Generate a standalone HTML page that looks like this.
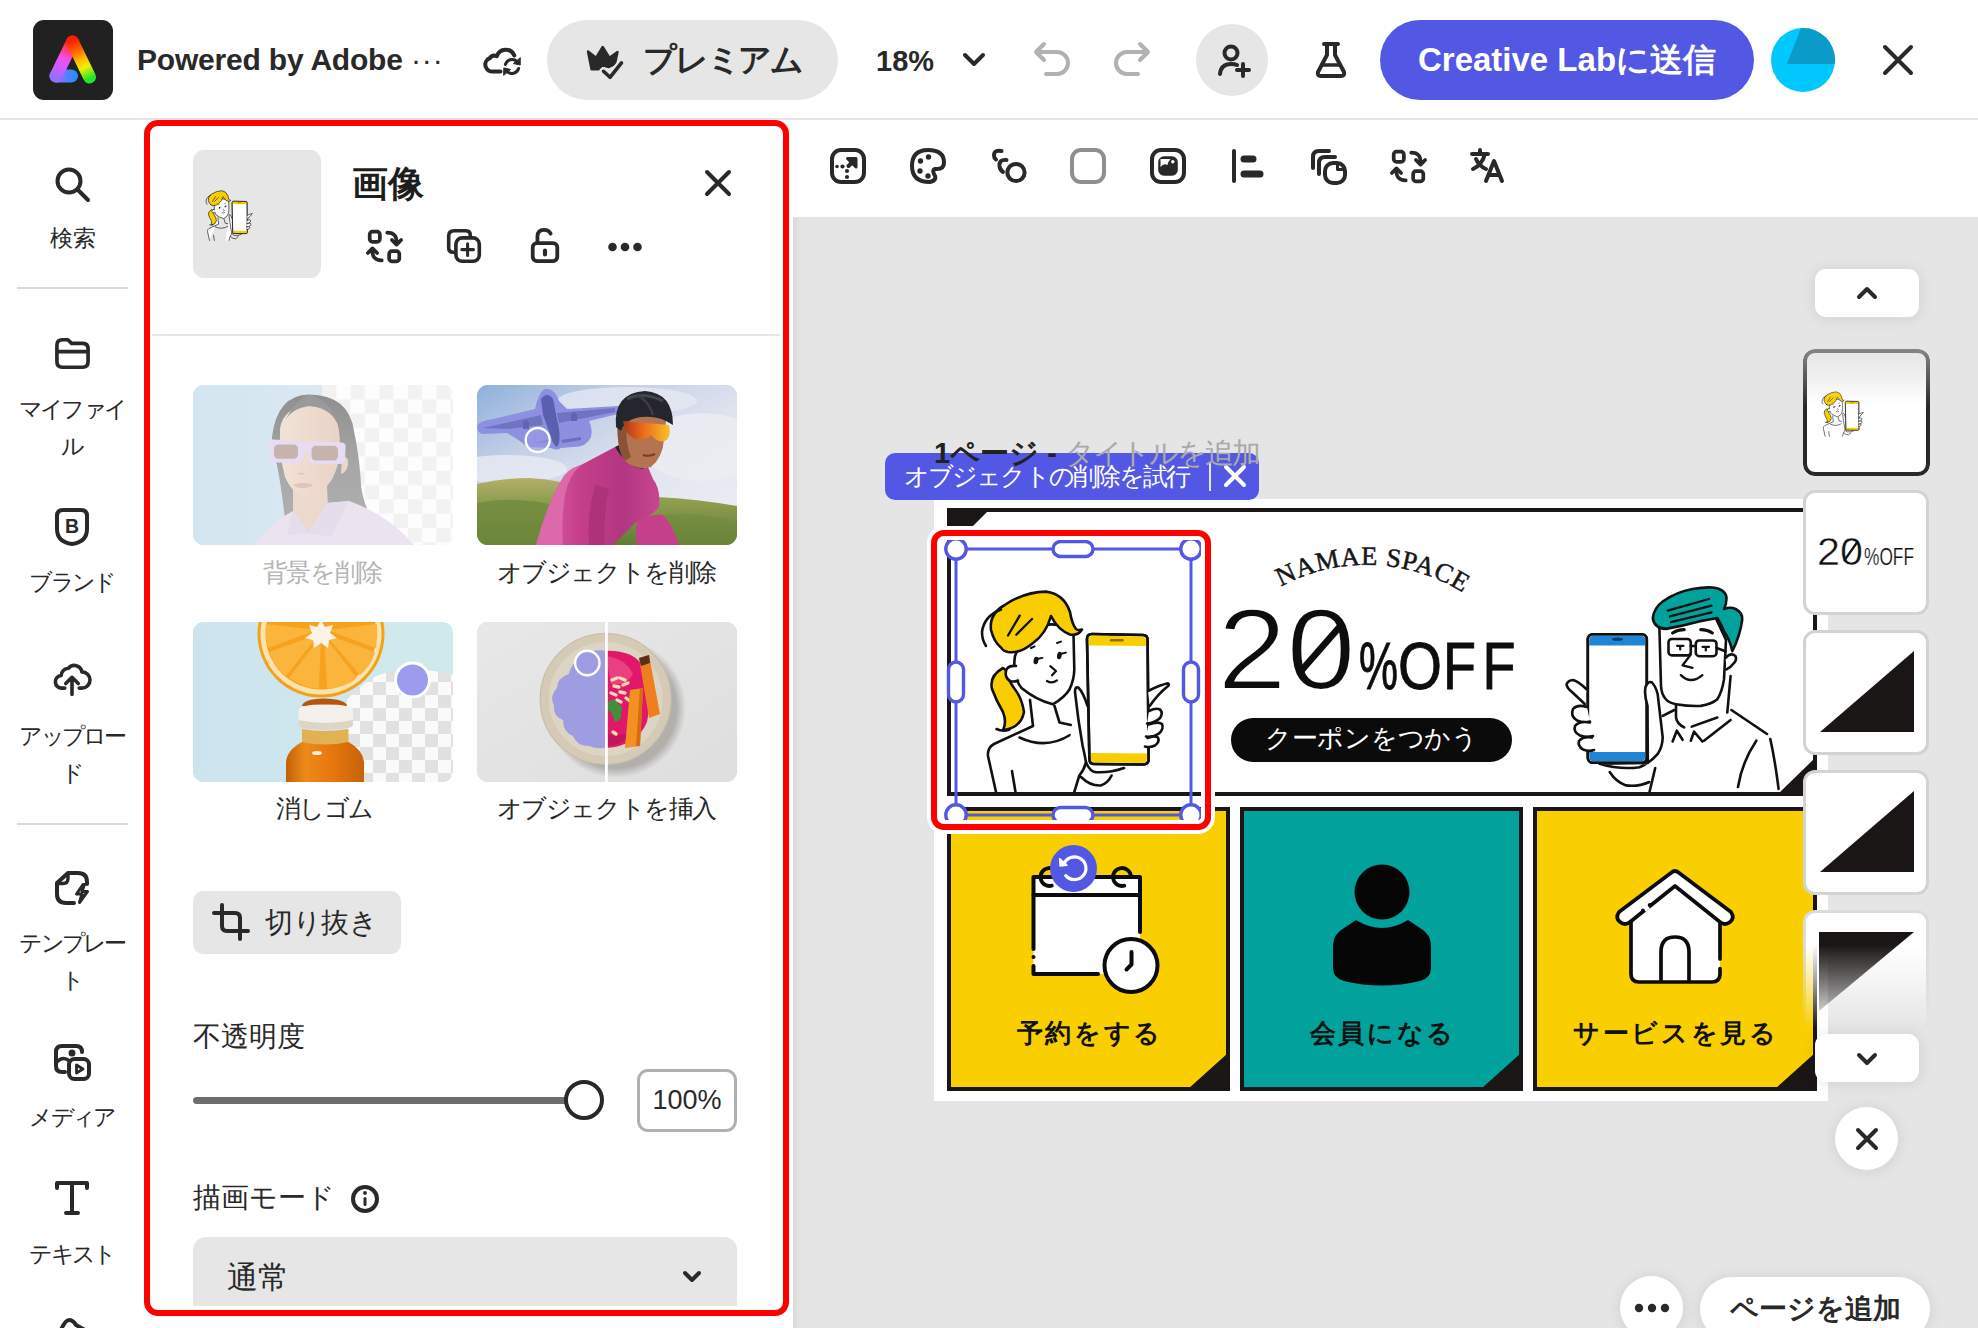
<!DOCTYPE html>
<html lang="ja">
<head>
<meta charset="utf-8">
<title>Adobe Express</title>
<style>
*{box-sizing:border-box;margin:0;padding:0}
html,body{width:1978px;height:1328px;overflow:hidden;background:#fff}
body{font-family:"Liberation Sans",sans-serif;color:#292929;position:relative}
.abs{position:absolute}
svg{position:absolute;overflow:visible}
.ic{fill:none;stroke:#292929;stroke-width:4;stroke-linecap:round;stroke-linejoin:round}
/* top bar */
#topbar{position:absolute;left:0;top:0;width:1978px;height:120px;background:#fff;border-bottom:2px solid #e6e6e6}
#logo{position:absolute;left:33px;top:20px;width:80px;height:80px;border-radius:11px;background:#212121}
#brand{position:absolute;left:137px;top:42px;font-size:30px;font-weight:bold;line-height:36px;white-space:nowrap;letter-spacing:-0.2px}
#premium{position:absolute;left:547px;top:20px;width:291px;height:80px;border-radius:40px;background:#e6e6e6}
#premium span{position:absolute;left:96px;top:20px;font-size:33px;font-weight:bold;line-height:40px;white-space:nowrap;letter-spacing:-2.2px}
#zoom{position:absolute;left:876px;top:43px;font-size:29px;font-weight:bold;line-height:36px}
#invite{position:absolute;left:1196px;top:24px;width:72px;height:72px;border-radius:36px;background:#e6e6e6}
#send{position:absolute;left:1380px;top:20px;width:374px;height:80px;border-radius:40px;background:#5258e4;color:#fff;font-size:33px;font-weight:bold;line-height:80px;text-align:center;white-space:nowrap}
#avatar{position:absolute;left:1771px;top:28px;width:64px;height:64px;border-radius:32px;background:#00c8ff;overflow:hidden}
/* sidebar */
#side{position:absolute;left:0;top:120px;width:143px;height:1208px;background:#fff}
.sl{position:absolute;left:0;width:143px;text-align:center;font-size:23px;line-height:37px;color:#292929;white-space:nowrap;letter-spacing:-2.700px;padding-left:1px}
.sdiv{position:absolute;left:17px;width:111px;height:2px;background:#dadada}
</style>
</head>
<body>

<!-- ================= TOP BAR ================= -->
<div id="topbar">
  <div id="logo">
    <svg width="80" height="80" viewBox="0 0 80 80" style="left:0;top:0" fill="none" stroke-width="13" stroke-linecap="round" stroke-linejoin="round">
      <defs>
        <linearGradient id="lgR" gradientUnits="userSpaceOnUse" x1="39" y1="20" x2="57" y2="58">
          <stop offset="0" stop-color="#ff1a00"/><stop offset=".3" stop-color="#ff6a00"/><stop offset=".55" stop-color="#ffc400"/><stop offset=".72" stop-color="#f2f000"/><stop offset="1" stop-color="#22e82a"/>
        </linearGradient>
        <linearGradient id="lgL" gradientUnits="userSpaceOnUse" x1="40" y1="20" x2="22" y2="58">
          <stop offset="0" stop-color="#ff1a00"/><stop offset=".25" stop-color="#ff3a6a"/><stop offset=".5" stop-color="#f050f0"/><stop offset=".8" stop-color="#c060ff"/><stop offset="1" stop-color="#9070ff"/>
        </linearGradient>
        <linearGradient id="lgB" gradientUnits="userSpaceOnUse" x1="22" y1="56" x2="42" y2="56">
          <stop offset="0" stop-color="#9a70ff"/><stop offset=".5" stop-color="#5f7cff"/><stop offset="1" stop-color="#2b8cff"/>
        </linearGradient>
      </defs>
      <path d="M23 56 H38.500" stroke="url(#lgB)"/>
      <path d="M39.500 22 L23 56" stroke="url(#lgL)"/>
      <path d="M39.500 22 L56.500 57" stroke="url(#lgR)"/>
    </svg>
  </div>
  <div id="brand">Powered by Adobe <span style="font-weight:normal;letter-spacing:1px">···</span></div>
  <!-- cloud sync -->
  <svg width="70" height="60" viewBox="470 30 70 60" style="left:470px;top:30px" class="ic" stroke-width="3.300">
    <path d="M500.500 71.500 H493.500 A7 7 0 0 1 490 58 Q492.500 54.500 496.800 56.200 A9.300 9.300 0 0 1 514.300 55.500"/>
    <path d="M505.400 64.500 A7 7 0 0 1 517 61.600" stroke-width="3"/><path d="M520.300 58 L520.200 65 L513.800 63.600 Z" fill="#292929" stroke-width="1"/>
    <path d="M518.600 68.500 A7 7 0 0 1 507 71.400" stroke-width="3"/><path d="M503.700 75 L503.800 68 L510.200 69.400 Z" fill="#292929" stroke-width="1"/>
  </svg>
  <div id="premium">
    <svg width="291" height="80" viewBox="547 20 291 80" style="left:0;top:0">
      <path d="M588 51.500 L596 57.800 L602.700 47 L609.500 57.800 L617.500 52 L615 64 L609 67 L602.500 65.500 L598.500 69.300 L591.500 69.300 Z" fill="#292929" stroke="#292929" stroke-width="2.400" stroke-linejoin="round"/>
      <path d="M603.500 71.300 L610 77.300 L621.500 62.800" fill="none" stroke="#e6e6e6" stroke-width="8" stroke-linecap="round" stroke-linejoin="round"/>
      <path d="M603.500 71.300 L610 77.300 L621.500 62.800" fill="none" stroke="#292929" stroke-width="3.600" stroke-linecap="round" stroke-linejoin="round"/>
    </svg>
    <span>プレミアム</span>
  </div>
  <div id="zoom">18%</div>
  <svg width="24" height="16" viewBox="0 0 24 16" style="left:962px;top:52px" class="ic" stroke-width="4"><path d="M3 3 L12 12 L21 3"/></svg>
  <!-- undo / redo -->
  <svg width="40" height="40" viewBox="0 0 40 40" style="left:1032px;top:40px" class="ic" stroke="#b1b1b1" stroke-width="3.6"><path d="M12 4 L4 12 L12 20 M4 12 H25 A11 11 0 0 1 25 34 H14" style="stroke:#b1b1b1"/></svg>
  <svg width="40" height="40" viewBox="0 0 40 40" style="left:1112px;top:40px" class="ic" stroke-width="3.6"><path d="M28 4 L36 12 L28 20 M36 12 H15 A11 11 0 0 0 15 34 H26" style="stroke:#b1b1b1"/></svg>
  <div id="invite">
    <svg width="36" height="36" viewBox="0 0 36 36" style="left:20px;top:19px" class="ic" stroke-width="3.4">
      <circle cx="15" cy="10" r="6.500"/><path d="M4 31 Q5 21 15 21 Q19 21 21 22"/><path d="M27 21 V33 M21 27 H33"/>
    </svg>
  </div>
  <!-- flask -->
  <svg width="36" height="40" viewBox="0 0 36 40" style="left:1313px;top:40px" class="ic" stroke-width="4">
    <path d="M11 4 H25 M14 4 V15 L5 32 Q4 36 8 36 H28 Q32 36 31 32 L22 15 V4"/><path d="M10 25 H26" stroke-width="3.5"/>
  </svg>
  <div id="send">Creative Labに送信</div>
  <div id="avatar">
    <svg width="64" height="64" viewBox="0 0 64 64" style="left:0;top:0"><path d="M30 0 L64 0 L64 36 L16 36 Z" fill="#0a9bc9"/></svg>
  </div>
  <svg width="34" height="34" viewBox="0 0 34 34" style="left:1881px;top:43px" class="ic" stroke-width="4.5"><path d="M4 4 L30 30 M30 4 L4 30"/></svg>
</div>

<!-- ================= SIDEBAR ================= -->
<div id="side">
  <!-- coordinates inside are relative to y=120 -->
  <svg width="40" height="40" viewBox="0 0 40 40" style="left:52px;top:44px" class="ic" stroke-width="4.2"><circle cx="17" cy="17" r="11.500"/><path d="M26 26 L36 36"/></svg>
  <div class="sl" style="top:100px;letter-spacing:0;padding-left:3px">検索</div>
  <div class="sdiv" style="top:167px"></div>
  <svg width="37" height="33" viewBox="0 0 40 36" style="left:54px;top:217px" class="ic" stroke-width="4.500"><path d="M3 9 Q3 3 9 3 H15 L19 7 H31 Q37 7 37 13 V27 Q37 33 31 33 H9 Q3 33 3 27 Z M3 16 H37"/></svg>
  <div class="sl" style="top:271px">マイファイ</div>
  <div class="sl" style="top:308px">ル</div>
  <svg width="36" height="40" viewBox="0 0 36 40" style="left:54px;top:387px" class="ic" stroke-width="4.200"><path d="M3 9 Q3 3 9 3 H27 Q33 3 33 9 V22 Q33 35 18 37 Q3 35 3 22 Z"/><text x="18" y="25.800" font-family="Liberation Sans, sans-serif" font-size="19.500" font-weight="bold" text-anchor="middle" fill="#292929" stroke="none">B</text></svg>
  <div class="sl" style="top:444px">ブランド</div>
  <svg width="36" height="36" viewBox="0 0 40 40" style="left:54px;top:542px" class="ic" stroke-width="4.400"><path d="M12 29 H9 A7 7 0 0 1 8 15 A8 8 0 0 1 16 7 A8.500 8.500 0 0 1 31 11 A7.500 7.500 0 0 1 31 29 H28"/><path d="M20 36 V18 M13 24 L20 17 L27 24"/></svg>
  <div class="sl" style="top:598px">アップロー</div>
  <div class="sl" style="top:635px">ド</div>
  <div class="sdiv" style="top:703px"></div>
  <svg width="38" height="38" viewBox="0 0 38 38" style="left:53px;top:749px" class="ic" stroke-width="3.800"><path d="M34 15 V13 Q34 4 25 4 H15 L4 14 V25 Q4 34 13 34 H21"/><path d="M4 14.500 H10 Q15 14.500 15 9.500 V4.500" stroke-width="3.400"/><path d="M30 15.500 L23.500 25 H29 L26.500 33.500 L34.500 22.500 H29 L31.500 15.500 Z" stroke-width="3" fill="#fff"/></svg>
  <div class="sl" style="top:805px">テンプレー</div>
  <div class="sl" style="top:842px">ト</div>
  <svg width="40" height="40" viewBox="0 0 40 40" style="left:52px;top:922px" class="ic" stroke-width="4"><path d="M13 30 H10 Q4 30 4 24 V10 Q4 4 10 4 H24 Q30 4 30 10"/><path d="M5 20 Q10 14 16 18" stroke-width="3.4"/><circle cx="20" cy="11" r="1.500" fill="#292929"/><rect x="17" y="17" width="20" height="20" rx="5.500"/><path d="M24.500 23 V31 L31 27 Z" stroke-width="2.800"/></svg>
  <div class="sl" style="top:979px">メディア</div>
  <svg width="40" height="40" viewBox="0 0 40 40" style="left:52px;top:1058px" class="ic" stroke-width="4"><path d="M5 10 V5 H35 V10 M20 5 V35 M14 35 H26"/></svg>
  <div class="sl" style="top:1116px">テキスト</div>
  <svg width="40" height="20" viewBox="0 0 40 20" style="left:49px;top:1196px" class="ic" stroke-width="4"><path d="M11 16 Q16 4 20 4 Q24 4 27 9 L36 14"/></svg>
  <div class="abs" style="left:143px;top:1196px;width:2px;height:12px;background:#e3e3e3"></div>
</div>

<!-- ================= PANEL ================= -->
<style>
#panel{position:absolute;left:143px;top:120px;width:650px;height:1208px;background:#fff;overflow:hidden}
#panelred{position:absolute;left:144px;top:120px;width:645px;height:1196px;border:6px solid #ff0000;border-radius:14px;z-index:20;pointer-events:none}
#pthumb{position:absolute;left:50px;top:30px;width:128px;height:128px;border-radius:11px;background:#e6e6e6;overflow:hidden}
#ptitle{position:absolute;left:209px;top:40px;font-size:36px;font-weight:bold;line-height:48px;color:#1d1d1d}
.card{position:absolute;width:260px;height:160px;border-radius:11px;overflow:hidden}
.clab{position:absolute;width:300px;text-align:center;font-size:25px;line-height:36px;white-space:nowrap;color:#292929;letter-spacing:-1.400px;text-indent:-1.400px}
#cropbtn{position:absolute;left:50px;top:771px;width:208px;height:63px;border-radius:10px;background:#e6e6e6}
#cropbtn span{position:absolute;left:72px;top:13px;font-size:28px;line-height:38px;white-space:nowrap;letter-spacing:-.500px}
.plabel{position:absolute;left:50px;font-size:28px;line-height:40px;white-space:nowrap}
#track{position:absolute;left:50px;top:977px;width:380px;height:7px;border-radius:4px;background:#6d6d6d}
#knob{position:absolute;left:421px;top:960px;width:40px;height:40px;border-radius:20px;background:#fff;border:4px solid #292929}
#opin{position:absolute;left:494px;top:949px;width:100px;height:63px;border-radius:11px;border:3px solid #b1b1b1;background:#fff;font-size:27px;line-height:57px;text-align:center}
#blend{position:absolute;left:50px;top:1117px;width:544px;height:69px;border-radius:13px 13px 0 0;background:#e6e6e6;overflow:hidden}
#blend span{position:absolute;left:34px;top:20px;font-size:31px;line-height:42px}
</style>
<div id="panel">
  <div id="pthumb">
    <svg width="128" height="128" viewBox="193 151 128 128" style="left:0;top:0"><use href="#woman" transform="translate(-37.500,45) scale(.248)" style="stroke:#333;stroke-width:3.400"/></svg>
  </div>
  <div id="ptitle">画像</div>
  <svg width="30" height="30" viewBox="0 0 30 30" style="left:560px;top:48px" class="ic" stroke-width="4"><path d="M4 4 L26 26 M26 4 L4 26"/></svg>
  <!-- action icons row (y center 246 abs => 126 rel) -->
  <svg width="37" height="37" viewBox="0 0 40 40" style="left:222.500px;top:108px" class="ic" stroke-width="4.300">
    <rect x="4" y="4" width="11" height="11" rx="3"/><rect x="25" y="25" width="11" height="11" rx="3"/>
    <path d="M23 5 Q34 5 33 17 M28 13 L33 18 L38 13"/><path d="M17 35 Q6 35 7 23 M2 27 L7 22 L12 27"/>
  </svg>
  <svg width="36" height="36" viewBox="0 0 40 40" style="left:303px;top:108px" class="ic" stroke-width="4.200">
    <path d="M9 27 H8 Q3 27 3 22 V9 Q3 3 9 3 H22 Q27 3 27 8 V9"/><rect x="11" y="11" width="26" height="26" rx="7"/><path d="M24 17.500 V30.500 M17.500 24 H30.500" stroke-width="3.400"/>
  </svg>
  <svg width="34" height="38" viewBox="0 0 36 40" style="left:384.500px;top:106px" class="ic" stroke-width="4.200">
    <rect x="5" y="18" width="26" height="19" rx="4.500"/><path d="M10 18 V11 Q10 4 17 4 Q22 4 24 8"/><path d="M18 26 V30" stroke-width="4.400"/>
  </svg>
  <svg width="40" height="12" viewBox="0 0 40 12" style="left:461.500px;top:120.500px"><circle cx="7.500" cy="6" r="4.300" fill="#292929"/><circle cx="20" cy="6" r="4.300" fill="#292929"/><circle cx="32.500" cy="6" r="4.300" fill="#292929"/></svg>
  <div class="abs" style="left:9px;top:214px;width:628px;height:2px;background:#e6e6e6"></div>

  <!-- card 1: remove background (disabled / faded) -->
  <div class="card" style="left:50px;top:265px;background:#dde9f1">
    <svg width="260" height="160" viewBox="0 0 260 160" style="left:0;top:0">
      <defs>
        <pattern id="chk1" x="129" y="0" width="28.600" height="28.600" patternUnits="userSpaceOnUse"><rect width="28.600" height="28.600" fill="#fdfdfd"/><rect width="14.300" height="14.300" fill="#f2f2f2"/><rect x="14.300" y="14.300" width="14.300" height="14.300" fill="#f2f2f2"/></pattern>
        <linearGradient id="c1bg" x1="0" y1="0" x2="1" y2="0"><stop offset="0" stop-color="#d3e5f0"/><stop offset="1" stop-color="#e2ecf4"/></linearGradient>
        <linearGradient id="hairg" x1="0" y1="0" x2="0" y2="1"><stop offset="0" stop-color="#8f8f8f"/><stop offset=".5" stop-color="#a6a6a6"/><stop offset="1" stop-color="#b2b2b2"/></linearGradient>
        <linearGradient id="faceg" x1="0" y1="0" x2="1" y2="0"><stop offset="0" stop-color="#f2e2d6"/><stop offset="1" stop-color="#e9d3c6"/></linearGradient>
      </defs>
      <rect width="260" height="160" fill="url(#c1bg)"/>
      <rect x="129" y="0" width="131" height="160" fill="url(#chk1)"/>
      <!-- hair -->
      <path d="M79 52 Q84 10 116 9.500 Q156 10 161 46 Q166 70 167.500 92 Q168 112 176 128 L150 146 L92 134 Q88 100 84 80 Q79 66 79 52 Z" fill="url(#hairg)"/>
      <!-- neck -->
      <path d="M100 104 L100 150 L136 150 L134 100 Z" fill="#ecd9cd"/>
      <!-- face -->
      <path d="M87 44 Q90 22 116 21 Q144 22 146 46 Q150 76 138 96 Q126 112 113 112.500 Q100 110 92 92 Q86 70 87 44 Z" fill="url(#faceg)"/>
      <path d="M114 10 Q100 18 90 40 Q96 24 116 21 Q138 22 146 42 Q140 18 118 10 Z" fill="#9a9a9a"/>
      <path d="M149 72 Q156 70 155 80 Q153 88 148 89 Z" fill="#ead6ca"/>
      <!-- sunglasses -->
      <path d="M76 58 Q76 54.500 80 54.600 L106 56 Q110 56.500 112 59 Q114 56.500 119 56.500 L149 57.500 Q153 58 152.600 62 L152 75 Q151.500 79 147 79 L121 78.500 Q116 78 115.500 73 L115 66 L111 66 L110.500 73 Q110 78 105 78 L81 77.500 Q76.500 77 76.500 72.500 Z" fill="#e7dcf4"/>
      <rect x="81" y="59.500" width="24" height="14.300" rx="4.500" fill="#c6b3ab"/>
      <rect x="118.500" y="60.800" width="26.500" height="14.800" rx="4.500" fill="#c6b3ab"/>
      <path d="M105 88 q3 2 6 0 M101 100 q9 -3 18 0 q-9 5 -18 0 Z" fill="#e4c4bb" stroke="#e0c0b6" stroke-width="1.200"/>
      <!-- shirt -->
      <path d="M62 160 Q74 140 100 126 L116 148 L134 118 L156 116 Q196 130 221 160 Z" fill="#ebe4f0"/>
      <path d="M100 126 L94 150 L116 148 L138 152 L156 116 L134 118 L116 148 Z" fill="#e5dcec"/>
    </svg>
  </div>
  <div class="clab" style="left:30px;top:434px;color:#b4b4b4">背景を削除</div>

  <!-- card 2: remove object -->
  <div class="card" style="left:334px;top:265px;background:#d5dcea">
    <svg width="260" height="160" viewBox="0 0 260 160" style="left:0;top:0">
      <defs>
        <linearGradient id="sky" x1="0" y1="0" x2="1" y2="1"><stop offset="0" stop-color="#8fb0dc"/><stop offset=".28" stop-color="#c3cfe6"/><stop offset=".6" stop-color="#e2e5ef"/><stop offset="1" stop-color="#eef0f4"/></linearGradient>
        <linearGradient id="hill" x1="0" y1="0" x2="0" y2="1"><stop offset="0" stop-color="#b6ae6c"/><stop offset=".3" stop-color="#93a052"/><stop offset="1" stop-color="#5f7c34"/></linearGradient>
        <linearGradient id="gog" x1="0" y1="0" x2="1" y2="0"><stop offset="0" stop-color="#a8381a"/><stop offset=".45" stop-color="#ee6c1c"/><stop offset="1" stop-color="#f5c22e"/></linearGradient>
        <linearGradient id="jer" x1="0" y1="0" x2="1" y2="0"><stop offset="0" stop-color="#d862a4"/><stop offset=".35" stop-color="#c63f8b"/><stop offset=".7" stop-color="#b23680"/><stop offset="1" stop-color="#c8468f"/></linearGradient>
      </defs>
      <rect width="260" height="160" fill="url(#sky)"/>
      <ellipse cx="150" cy="16" rx="70" ry="14" fill="#e6e9f2" opacity=".75"/>
      <ellipse cx="225" cy="62" rx="60" ry="34" fill="#ecedf3" opacity=".8"/>
      <ellipse cx="30" cy="84" rx="60" ry="14" fill="#e9ebf2" opacity=".8"/>
      <!-- hills -->
      <path d="M0 99 Q26 93 52 93 Q84 94 110 106 L180 112 Q220 114 260 121 V160 H0 Z" fill="url(#hill)"/>
      <path d="M0 118 Q40 110 84 122 L84 160 H0 Z" fill="#6f8a3c" opacity=".75"/>
      <path d="M176 132 Q220 124 260 138 V160 H176 Z" fill="#708a3a" opacity=".6"/>
      <!-- plane blob -->
      <path d="M0 41 Q2 36 16 34 L58 24 Q62 6 68 4 Q77 2 82 16 L90 24 L141 21 Q146 25 141 29 L112 36 Q116 44 114 52 Q110 62 96 62 L84 63 Q80 66 74 63 L50 62 Q44 56 30 48 L6 49 Q0 48 0 41 Z" fill="#8d90e0"/>
      <path d="M64 14 Q70 6 76 14 L82 44 Q84 58 80 62 Q76 60 74 52 L66 30 Z" fill="#5b60ae"/>
      <path d="M6 43 L64 30 L66 40 L30 44 Z M80 28 L138 23 L138 27 L82 38 Z" fill="#6f73c0"/>
      <path d="M46 38 q3 -6 6 0 v6 h-6 Z M94 30 q3 -6 6 0 v6 h-6 Z" fill="#5f64b2"/>
      <path d="M56 58 L74 54 L74 57 Z M84 55 L104 52 L104 55 L86 58 Z" fill="#6a6ebc"/>
      <circle cx="60.700" cy="55" r="12" fill="#9b9ee8" fill-opacity=".55" stroke="#fff" stroke-width="2.400"/>
      <!-- cyclist body -->
      <path d="M59 160 Q70 120 84 96 Q90 84 104 80 L138 62 L166 70 L176 94 Q184 104 182 122 Q172 134 160 136 L136 160 Z" fill="url(#jer)"/>
      <path d="M104 80 Q92 90 88 110 Q84 136 86 160 L59 160 Q70 120 84 96 Q90 84 104 80 Z" fill="#dc6aaa"/>
      <path d="M118 100 Q110 130 112 160 L128 160 Q126 128 132 104 Z" fill="#a52f74" opacity=".7"/>
      <path d="M160 136 Q176 128 186 130 Q196 140 202 160 L160 160 Q158 146 160 136 Z" fill="#c5408b"/>
      <!-- neck / collar -->
      <path d="M138 62 L150 56 L172 70 L166 84 Q150 82 138 62 Z" fill="#2a2326"/>
      <!-- face -->
      <path d="M141 28 Q138 62 148 76 Q160 86 174 82 Q186 72 187 54 L190 28 Z" fill="#b47452"/>
      <path d="M141 36 Q139 62 148 76 L154 72 Q148 58 150 40 Z" fill="#8a5238"/>
      <path d="M166 70 q6 2 12 -1" stroke="#7a3f2c" stroke-width="2" fill="none"/>
      <!-- helmet -->
      <path d="M139 42 Q136 8 168 6 Q196 8 196 40 Q182 30 164 32 Q148 34 144 46 Z" fill="#23262c"/>
      <path d="M150 14 Q166 6 186 16" stroke="#41464f" stroke-width="3" fill="none"/>
      <path d="M160 10 Q172 16 176 30" stroke="#3a3f48" stroke-width="2.500" fill="none"/>
      <!-- goggles -->
      <path d="M146 36 L192 40 Q195 52 188 56 Q180 58 174 50 Q168 56 158 54 Q148 50 146 36 Z" fill="url(#gog)"/>
    </svg>
  </div>
  <div class="clab" style="left:314px;top:434px">オブジェクトを削除</div>

  <!-- card 3: eraser -->
  <div class="card" style="left:50px;top:502px;background:#cfe6ee">
    <svg width="260" height="160" viewBox="0 0 260 160" style="left:0;top:0">
      <defs>
        <pattern id="chk3" x="154" y="8" width="26" height="26" patternUnits="userSpaceOnUse"><rect width="26" height="26" fill="#fafafa"/><rect width="13" height="13" fill="#e1e1e1"/><rect x="13" y="13" width="13" height="13" fill="#e1e1e1"/></pattern>
        <linearGradient id="c3bg" x1="0" y1="0" x2="1" y2="0"><stop offset="0" stop-color="#cde4ef"/><stop offset="1" stop-color="#cfeaec"/></linearGradient>
        <linearGradient id="btl" x1="0" y1="0" x2="1" y2="0"><stop offset="0" stop-color="#c2600a"/><stop offset=".25" stop-color="#ee8a1a"/><stop offset=".6" stop-color="#e6760e"/><stop offset="1" stop-color="#c66208"/></linearGradient>
        <clipPath id="c3clip"><rect width="260" height="160"/></clipPath>
      </defs>
      <rect width="260" height="160" fill="url(#c3bg)"/>
      <path d="M152 160 L152 80 Q164 66 176 58 Q196 46 222 48 Q244 48 260 53 V160 Z" fill="url(#chk3)"/>
      <!-- orange slice -->
      <g clip-path="url(#c3clip)">
        <circle cx="128" cy="12" r="63.500" fill="#f5a01a"/>
        <circle cx="128" cy="12" r="60.500" fill="#fbe2ae"/>
        <circle cx="128" cy="12" r="55.500" fill="#f6a21e"/>
        <g fill="#fbb43c"><path d="M128 14 L96 56 Q110 66 126 67 Z"/><path d="M131 14 L134 67 Q152 66 164 56 Z"/><path d="M126 12 L76 30 Q82 46 93 54 Z"/><path d="M132 12 L167 53 Q178 44 182 30 Z"/><path d="M124 8 L73 2 Q72 16 75 26 Z"/><path d="M134 8 L183 26 Q185 14 184 2 Z"/></g>
        <path d="M128 -2 l4 7 l8 -2 l-3 8 l7 5 l-8 2 l-1 8 l-7 -5 l-7 5 l-1 -8 l-8 -2 l7 -5 l-3 -8 l8 2 Z" fill="#fbf3e6"/>
      </g>
      <!-- bottle -->
      <path d="M109 84 Q110 77 131 76.500 Q153 77 154 84 Z" fill="#b5560c"/>
      <path d="M105.500 88 Q105.500 82.500 132 82.500 Q160 82.500 160 88 L160 103 Q160 107.500 132 108 Q105.500 107.500 105.500 103 Z" fill="#f4f1ec"/>
      <path d="M105.500 98 Q132 104 160 98 L160 103 Q160 107.500 132 108 Q105.500 107.500 105.500 103 Z" fill="#ddd6c8"/>
      <path d="M109 107 Q132 111 155.500 107 L155.500 122 Q132 126 109 122 Z" fill="#e0b254"/>
      <path d="M109 120 Q132 125 155.500 120 Q170 128 171 140 V160 H93 V140 Q94 128 109 120 Z" fill="url(#btl)"/>
      <ellipse cx="124" cy="131" rx="5" ry="2" fill="#fff" opacity=".85"/>
      <!-- eraser dot -->
      <circle cx="219.500" cy="58" r="17" fill="#9d9cec" stroke="#fff" stroke-width="3"/>
    </svg>
  </div>
  <div class="clab" style="left:32px;top:670px">消しゴム</div>

  <!-- card 4: insert object -->
  <div class="card" style="left:334px;top:502px;background:#e3e3e3">
    <svg width="260" height="160" viewBox="0 0 260 160" style="left:0;top:0">
      <defs>
        <linearGradient id="c4l" x1="0" y1="0" x2="1" y2="1"><stop offset="0" stop-color="#e8e8e8"/><stop offset="1" stop-color="#dedede"/></linearGradient>
        <clipPath id="rhalf"><rect x="129.400" y="0" width="131" height="160"/></clipPath>
        <clipPath id="lhalf"><rect x="0" y="0" width="129.400" height="160"/></clipPath>
        <radialGradient id="shd" cx=".5" cy=".5" r=".5"><stop offset=".86" stop-color="#a9a7a2"/><stop offset="1" stop-color="#a9a7a2" stop-opacity="0"/></radialGradient>
      </defs>
      <rect width="260" height="160" fill="url(#c4l)"/>
      <circle cx="139" cy="86" r="70" fill="url(#shd)" opacity=".85"/>
      <circle cx="128.700" cy="77" r="65.500" fill="#d4cab6"/>
      <circle cx="128.700" cy="77" r="57" fill="#ddd5c4"/>
      <circle cx="128.700" cy="77" r="65.500" fill="none" stroke="#c6bca8" stroke-width="1.200"/>
      <!-- purple blob (left) -->
      <g clip-path="url(#lhalf)">
        <path d="M130 28.700 Q112 27 104 34 Q92 46 92 52 Q80 56 80 66 Q72 74 77 84 Q76 94 86 98 Q86 110 96 114 Q100 124 112 124 Q122 128 130 125 Z" fill="#9f9de2"/>
      </g>
      <!-- food (right) -->
      <g clip-path="url(#rhalf)">
        <path d="M129 28.700 Q156 28 166 44 Q176 70 170 100 Q160 124 129 126 Z" fill="#e0186a"/>
        <path d="M129 34 Q148 36 156 52 Q150 64 134 62 Z" fill="#ea3f80"/>
        <path d="M131 112 Q146 116 154 108 Q150 122 131 124 Z" fill="#c4145c"/>
        <g stroke="#f0dcae" stroke-width="3.400" stroke-linecap="round" fill="none"><path d="M135 58 l5 -2 M143 56 l5 2 M137 64 l5 1 M146 63 l5 -2 M134 71 l5 2 M143 70 l5 1 M149 76 l4 3 M140 78 l4 2 M136 110 l3 2"/></g>
        <path d="M131 80 q6 -6 10 2 q6 2 3 8 q2 8 -6 10 q-2 -6 -4 -10 q-6 -2 -3 -10 Z" fill="#3f8f3c"/>
        <path d="M162 36 L172 33 L183 92 L172 96 Z" fill="#ef7e1e"/>
        <path d="M162 36 L172 33 L173 41 L164 44 Z" fill="#5a3018"/>
        <path d="M153 68 L166 66 L163 124 L148 126 Z" fill="#f3901f"/>
        <path d="M163 66 L166 66 L163 124 L159 124 Z" fill="#d66c12"/>
      </g>
      <rect x="128" y="0" width="2.800" height="160" fill="#fff"/>
      <circle cx="110.300" cy="41" r="12.200" fill="#9f9de2" stroke="#fff" stroke-width="2.400"/>
    </svg>
  </div>
  <div class="clab" style="left:314px;top:670px">オブジェクトを挿入</div>


  <div id="cropbtn">
    <svg width="40" height="40" viewBox="0 0 40 40" style="left:18px;top:11px" class="ic" stroke-width="4"><path d="M11 3 V24 Q11 29 16 29 H37 M3 11 H24 Q29 11 29 16 V37"/></svg>
    <span>切り抜き</span>
  </div>
  <div class="plabel" style="top:897px">不透明度</div>
  <div id="track"></div><div id="knob"></div>
  <div id="opin">100%</div>
  <div class="plabel" style="top:1058px">描画モード</div>
  <svg width="30" height="30" viewBox="0 0 30 30" style="left:207px;top:1064px" class="ic" stroke-width="3"><circle cx="15" cy="15" r="12"/><path d="M15 14.500 V20.500" stroke-width="3"/><circle cx="15" cy="9" r="1.900" fill="#292929" stroke="none"/></svg>
  <div id="blend"><span>通常</span>
    <svg width="20" height="14" viewBox="0 0 20 14" style="left:489px;top:33px" class="ic" stroke-width="3.800"><path d="M3 3 L10 10 L17 3"/></svg>
  </div>
</div>
<div id="panelred"></div>

<!--PANELEND-->
<!-- ================= CANVAS ================= -->
<style>
#ctool{position:absolute;left:793px;top:120px;width:1185px;height:98px;background:#fff}
#cbg{position:absolute;left:793px;top:217px;width:1185px;height:1111px;background:#e5e5e5;box-shadow:inset 6px 1px 5px -3px rgba(0,0,0,.06)}
#art{position:absolute;left:934px;top:499px;width:894px;height:602px;background:#fff}
#tip{position:absolute;left:885px;top:453px;width:374px;height:47px;border-radius:10px;background:#5258e4;color:#fff;font-size:25px;line-height:47px;white-space:nowrap}
#tip span{position:absolute;left:19px;top:0;letter-spacing:-1.9px}
#ptl{position:absolute;left:934px;top:433px;font-size:29px;line-height:40px;font-weight:bold;white-space:nowrap;color:#222}
#ptl i{font-style:normal;font-weight:normal;color:#a9a9a9;font-size:29px;letter-spacing:-2px}
.tile{position:absolute;top:807px;width:283px;height:284px;border:4px solid #1a1616}
.tlab{position:absolute;top:1012px;width:283px;text-align:center;font-size:26px;line-height:42px;color:#111;letter-spacing:2.600px;text-indent:2.600px;white-space:nowrap;font-weight:bold}
.rbtn{position:absolute;background:#fff;border-radius:11px;box-shadow:0 1px 14px 2px rgba(0,0,0,.075)}
.thumb{position:absolute;left:1803px;width:126px;height:125px;background:#fff;border:3px solid #d3d3d3;border-radius:12px;overflow:hidden}
</style>
<div id="ctool">
  <!-- icon centers: x=848,928,1008,1088,1168,1248,1328,1408,1488 ; y=167 (abs) -> rel x-793, y-120 -->
  <svg width="40" height="40" viewBox="0 0 40 40" style="left:35px;top:26px" class="ic" stroke-width="4"><rect x="4" y="4" width="32" height="32" rx="9"/><path d="M19.500 12.500 H28 V21 Z" fill="#292929" stroke-width="3"/><path d="M26 14.500 L20.500 20" stroke-width="4"/><g fill="#292929" stroke="none"><circle cx="9" cy="20.500" r="1.800"/><circle cx="14.500" cy="20.500" r="2.100"/><circle cx="19" cy="25" r="2.100"/><circle cx="19" cy="31" r="2.100"/></g></svg>
  <svg width="40" height="40" viewBox="0 0 40 40" style="left:115px;top:26px" class="ic" stroke-width="4"><path d="M20 4 Q36 4 36 16.500 Q36 23 29 23 H27 Q24 24 26 28 Q30 34 22 36 Q4 36 4 20 Q4 4 20 4 Z"/><g fill="#292929" stroke="none"><circle cx="12.500" cy="15" r="2.700"/><circle cx="20.500" cy="11" r="2.700"/><circle cx="12" cy="25" r="2.700"/><circle cx="20" cy="30" r="2.700"/></g></svg>
  <svg width="40" height="40" viewBox="0 0 40 40" style="left:195px;top:26px" class="ic" stroke-width="4"><circle cx="28" cy="26.500" r="8.600"/><path d="M18.500 14 Q11 13 11.500 20 Q12 24 15 26"/><path d="M13.500 5 Q6 3.500 6 9.500 Q6 12 8 13.500"/></svg>
  <svg width="40" height="40" viewBox="0 0 40 40" style="left:275px;top:26px" class="ic" stroke-width="3.600"><rect x="4" y="4" width="32" height="32" rx="9" style="stroke:#8f8f8f"/></svg>
  <svg width="40" height="40" viewBox="0 0 40 40" style="left:355px;top:26px" class="ic" stroke-width="4"><rect x="4" y="4" width="32" height="32" rx="9"/><rect x="11.500" y="11.500" width="17" height="17" rx="4.500" fill="#292929" stroke-width="2.600"/><path d="M12.500 13 H22.500 Q20 15.500 19.500 19 Q15.500 17 12.500 21 Z" fill="#fff" stroke="none"/><circle cx="24.800" cy="15.800" r="1.700" fill="#fff" stroke="none"/></svg>
  <svg width="40" height="40" viewBox="0 0 40 40" style="left:435px;top:26px" class="ic" stroke-width="4"><path d="M6 5 V35"/><path d="M16 13 H25" stroke-width="7"/><path d="M16 28 H32" stroke-width="7"/></svg>
  <svg width="40" height="40" viewBox="0 0 40 40" style="left:515px;top:26px" class="ic" stroke-width="3.800"><path d="M5 22 V11 Q5 5 11 5 H21"/><path d="M11 28 V17 Q11 11 17 11 H27"/><rect x="17" y="17" width="20" height="20" rx="8"/><path d="M29.500 18.500 V23.500 H35" stroke-width="3"/></svg>
  <svg width="37" height="37" viewBox="0 0 40 40" style="left:596.500px;top:28px" class="ic" stroke-width="4.300"><rect x="4" y="4" width="11" height="11" rx="3"/><rect x="25" y="25" width="11" height="11" rx="3"/><path d="M23 5 Q34 5 33 17 M28 13 L33 18 L38 13"/><path d="M17 35 Q6 35 7 23 M2 27 L7 22 L12 27"/></svg>
  <svg width="40" height="40" viewBox="0 0 40 40" style="left:675px;top:26px" class="ic" stroke-width="3.600"><path d="M4 8 H20 M12 4 V8 M17 8 Q14 19 5 23 M8 13 Q11 20 18 23"/><path d="M18 35 L26 15 L34 35 M21 29 H31" stroke-width="4"/></svg>
</div>
<div id="cbg"></div>
<div id="art"></div>

<!-- artwork drawn in page coordinates -->
<svg id="artsvg" width="1978" height="1328" viewBox="0 0 1978 1328" style="left:0;top:0">
  <defs>
    <clipPath id="artclip"><rect x="934" y="499" width="894" height="602"/></clipPath>
    <path id="arc" d="M1270 593 A 181 181 0 0 1 1474 600"/>
  </defs>
  <g clip-path="url(#artclip)">
    <!-- banner frame -->
    <rect x="949" y="510" width="866" height="284" fill="#fff" stroke="#1a1616" stroke-width="4"/>
    <path d="M947 508 H991 L973 526 H947 Z" fill="#1a1616"/>
    <path d="M1817 756 V796 H1776 Z" fill="#1a1616"/>
    <!-- NAMAE SPACE -->
    <text font-family="Liberation Serif, serif" font-size="26.500" fill="#161616" stroke="#161616" stroke-width=".500" letter-spacing=".700" text-anchor="middle"><textPath href="#arc" startOffset="50%">NAMAE SPACE</textPath></text>
    <!-- 20%OFF -->
    <g font-family="Liberation Sans, sans-serif" fill="#0d0d0d" stroke="#fff" paint-order="fill stroke" font-size="115" stroke-width="2">
      <text x="1217.500" y="689" textLength="69" lengthAdjust="spacingAndGlyphs">2</text>
      <text x="1286.500" y="689" textLength="69" lengthAdjust="spacingAndGlyphs">0</text>
    </g>
    <path d="M1301 671 L1343 623" stroke="#0d0d0d" stroke-width="6.500" stroke-linecap="butt"/>
    <g font-family="Liberation Sans, sans-serif" fill="#0d0d0d" stroke="#0d0d0d" stroke-width=".900" font-size="67">
      <text x="1359" y="689" textLength="39" lengthAdjust="spacingAndGlyphs">%</text>
      <text x="1398" y="689" textLength="44" lengthAdjust="spacingAndGlyphs">O</text>
      <text x="1443" y="689" textLength="33" lengthAdjust="spacingAndGlyphs">F</text>
      <text x="1482.500" y="689" textLength="33" lengthAdjust="spacingAndGlyphs">F</text>
    </g>
    <!-- coupon pill -->
    <rect x="1231" y="718" width="281" height="44" rx="22" fill="#0b0b0b"/>
    <text x="1371.500" y="747" font-family="Liberation Sans, sans-serif" font-size="26" fill="#fff" text-anchor="middle" textLength="213" lengthAdjust="spacing">クーポンをつかう</text>
    <!-- woman illustration -->
    <g id="woman" fill="none" stroke="#111" stroke-width="2.600" stroke-linecap="round" stroke-linejoin="round">
      <!-- shoulders / body -->
      <path d="M996 792 L988 756 Q987 748 994 744 L1033 726 L1030 700" fill="#fff"/>
      <path d="M1012 771 L1015.500 792"/>
      <path d="M1019.500 737.500 Q1046 750 1070 735"/>
      <path d="M1054.500 706 L1059.500 722.500 L1071 725"/>
      <!-- ponytail -->
      <path d="M1003 668 Q989 676 992 689 Q996 700 1003 712 Q1007 722 1003 730 Q1021 728 1024 712 Q1022 698 1014 688 Q1008 680 1007 671 Z" fill="#f9ce00"/>
      <path d="M996.500 729 Q1003 732 1009.500 729.500"/>
      <!-- face -->
      <path d="M1015 656 Q1012 676 1021.500 688 Q1036 700 1052.800 704.300 Q1064 698 1069.500 689.500 Q1074 680 1074.300 669.500 L1073.500 634 Q1050 612 1022 640 Z" fill="#fff"/>
      <!-- ear -->
      <path d="M1016 666 Q1004 665 1006 676 Q1009 684 1018 680.500" fill="#fff"/>
      <!-- top hair -->
      <path d="M1001.400 648 Q994 642 991 630 Q989 614 1004.700 605 Q1024 592 1046 591.600 Q1064 594 1070 612 Q1072 624 1076 629 Q1079 631 1082 629.500 Q1078 636 1070 634.500 Q1058 630 1051 616 Q1046 634 1033 643 Q1020 654 1008 652 Q1003 651 1001.400 648 Z" fill="#f9ce00"/>
      <path d="M1001 609.500 Q984 616 982 632 Q982 640 986 646"/>
      <path d="M1008 635.500 L1019.700 615.600 M1016.300 634.700 L1032 619" stroke-width="2.300"/>
      <!-- face features -->
      <ellipse cx="1036" cy="660.500" rx="2.400" ry="3.800" fill="#111" stroke="none" transform="rotate(12 1036 660.500)"/>
      <path d="M1037 659 L1042.500 657.800" stroke-width="1.800"/>
      <ellipse cx="1059.400" cy="655.600" rx="2.300" ry="3.800" fill="#111" stroke="none" transform="rotate(12 1059.400 655.600)"/>
      <path d="M1060 654 L1066 652.600" stroke-width="1.800"/>
      <path d="M1031 648 L1034.600 646.400 M1057 643 L1061 641.600" stroke-width="2"/>
      <path d="M1050.300 666.200 L1056 671 L1052 675.300" stroke-width="2.200"/>
      <path d="M1047 681 Q1052 684 1057 680.300" stroke-width="2.200"/>
      <!-- arm holding phone -->
      <path d="M1076 692 Q1075 686 1078.500 687.500 Q1083 692 1087.600 706 L1088 764 Q1084 772 1079.300 775.500 L1074.300 792 L1060 792 L1070 740 Z" fill="#fff" stroke="none"/>
      <path d="M1087.600 706 Q1083 692 1078.500 687.700 Q1075 686 1075 692 Q1078 720 1082.600 745.700 Q1085 756 1086 762.300 Q1084 770 1079.300 775.500 L1074.300 792"/>
      <!-- phone -->
      <path d="M1087 639 Q1087 634 1092 634 L1143 635 Q1147.500 635 1147.600 640 L1148.600 759 Q1148.600 764.500 1143 764.500 L1094 764 Q1089.500 764 1089.400 759 Z" fill="#fff"/>
      <path d="M1088.500 645.500 V640 Q1088.500 635.500 1093 635.500 L1142 636.500 Q1146 636.500 1146 641 V646 Z" fill="#f9ce00" stroke="none"/>
      <path d="M1090.600 753 L1147 753.500 V758 Q1147 763 1142.500 763 L1095 762.600 Q1090.800 762.600 1090.800 758 Z" fill="#f9ce00" stroke="none"/>
      <path d="M1111 640.300 H1122.500" stroke="#8a6e00" stroke-width="2.400"/>
      <path d="M1087 639 Q1087 634 1092 634 L1143 635 Q1147.500 635 1147.600 640 L1148.600 759 Q1148.600 764.500 1143 764.500 L1094 764 Q1089.500 764 1089.400 759 Z"/>
      <!-- hand -->
      <path d="M1148 691 Q1160 685 1168 683.300 Q1170 684.500 1167.500 686.500 Q1158 694 1149.700 706" fill="#fff"/>
      <path d="M1149 711 Q1156 707.500 1160 709.500 Q1163.500 713 1160 718 Q1155 723 1147 723.500" fill="#fff"/>
      <path d="M1148.500 724.500 Q1158 721 1162 724 Q1164 729 1159 733.500 Q1153 737.500 1146 736.500" fill="#fff"/>
      <path d="M1147.500 738 Q1154 735 1158 737.500 Q1160 742 1155 745.500 Q1150 748 1145 746.500" fill="#fff"/>
      <path d="M1086 762.300 Q1090 772 1096 772.200 Q1110 773 1124 768"/>
      <path d="M1081 777 Q1090 786 1100.800 785.500 Q1108 783 1111.600 775.500"/>
    </g>
    <!-- man illustration -->
    <g fill="none" stroke="#111" stroke-width="2.600" stroke-linecap="round" stroke-linejoin="round">
      <!-- shirt / body -->
      <path d="M1649.500 792 L1655.200 768 L1658 740 Q1662 722 1676 712 L1727 710 L1731.400 710 L1767 734 Q1771 737 1772 744 L1778.600 792 Z" fill="#fff" stroke="none"/>
      <path d="M1655.200 768 L1649.500 792"/>
      <path d="M1731.400 710 L1767 734 M1770.300 739 Q1775 760 1778.600 789"/>
      <path d="M1756.300 740.700 Q1742 762 1738 787"/>
      <!-- neck -->
      <path d="M1676 705 L1676 717.500 Q1677 724 1684.200 727.400" />
      <path d="M1730.600 676 L1727.300 712.500"/>
      <path d="M1662.700 715.800 L1674.300 710"/>
      <!-- collar -->
      <path d="M1691.700 726.600 L1717.300 717.500 M1704 740.700 L1730.600 720"/>
      <path d="M1672.600 741.500 L1676.800 730.700 L1682.600 739.800 M1690.800 740.700 L1694 731.600 L1702.400 741.500"/>
      <!-- face -->
      <path d="M1659.400 628 L1661 686 Q1662 702 1676 704.200 Q1690 706.500 1700.800 705.900 Q1712 704 1717.300 699.300 Q1722 692 1724 679.400 L1726 640 L1712 610 Z" fill="#fff"/>
      <!-- ear -->
      <path d="M1725.600 657.800 Q1731 652 1735.600 656.200 Q1737 660 1734 663 Q1731 667 1726.500 669.400" fill="#fff"/>
      <!-- hair -->
      <path d="M1652.800 618 Q1654 608 1662.700 601.500 Q1676 592 1692.500 589 Q1704 587 1712.400 587.500 Q1726 589 1726.500 598.200 Q1726.500 604 1724 609 Q1730 606.500 1735.600 609 Q1743 613 1742.200 619.800 Q1740 636 1732.300 651.200 Q1730 640 1724 631.300 Q1721 624 1717.300 618 Q1708 620 1699 621.400 Q1682 626 1666 628.900 Q1654 628 1652.800 618 Z" fill="#00a29b"/>
      <path d="M1667.700 610.600 L1709 599 M1670 616.400 L1711.500 605.700 M1671 622.200 L1711.500 612.300" stroke-width="2.300"/>
      <!-- glasses -->
      <rect x="1668.500" y="639" width="22.300" height="16.400" rx="3.500" fill="#fff"/>
      <rect x="1695.800" y="640.500" width="20.700" height="15.700" rx="3.500" fill="#fff"/>
      <path d="M1690.800 646 H1695.800 M1716.500 648 L1725.600 651.200"/>
      <path d="M1672.600 633 Q1678 629.500 1684.200 629.700 M1700.800 629.700 Q1707 629.500 1712.400 633" stroke-width="3.200"/>
      <path d="M1677 645.800 H1683.500 M1680.200 646 V649.500 M1702.500 646.800 H1709 M1705.800 647 V650.500" stroke-width="2.200"/>
      <path d="M1690.800 654.500 L1682.600 665.300 L1692.500 667.800" stroke-width="2.300"/>
      <path d="M1680.900 675.200 Q1690.800 685 1702.400 675.200" stroke-width="2.400"/>
      <!-- phone -->
      <rect x="1587.800" y="634.300" width="59" height="128.400" rx="5" fill="#fff"/>
      <path d="M1589.300 645.500 V640 Q1589.300 635.800 1593.500 635.800 H1641 Q1645.300 635.800 1645.300 640 V645.500 Z" fill="#1e86d4" stroke="none"/>
      <path d="M1589.300 752 H1645.300 V757 Q1645.300 761.200 1641 761.200 H1593.500 Q1589.300 761.200 1589.300 757 Z" fill="#1e86d4" stroke="none"/>
      <ellipse cx="1617.500" cy="639.300" rx="5.500" ry="1.700" fill="#0d3d6b" stroke="none"/>
      <rect x="1587.800" y="634.300" width="59" height="128.400" rx="5"/>
      <!-- fingers left of phone -->
      <path d="M1586.500 689.300 Q1578 681 1573 680 Q1568 680.500 1566.600 684.300 Q1567 688 1572 692 L1584.800 704" fill="#fff"/>
      <path d="M1587 707 Q1577 704 1573 709 Q1570 716 1577 720.500 Q1584 723.500 1590 721.500" fill="#fff"/>
      <path d="M1590 722.500 Q1579 720.500 1575 726 Q1573 732 1580 735.500 Q1587 738 1593 736" fill="#fff"/>
      <path d="M1592 737.500 Q1583 736 1579 741 Q1577.500 746 1583 749.500 Q1589 752 1594 750" fill="#fff"/>
      <!-- thumb / palm right of phone -->
      <path d="M1647.500 706 Q1644 694 1645.500 687 Q1648 680.500 1652 682.500 Q1656 687 1657.700 694.300 L1662.700 737.300 Q1662.500 747 1657.700 753.900 Q1650 763 1639.500 767.200 Q1620 770 1599.700 763.800 L1647.800 763 Z" fill="#fff"/>
      <path d="M1609.700 772 Q1616 782 1626 785.400 Q1638 787 1649.400 782"/>
    </g>
  </g>
</svg>

<!-- tiles -->
<div class="tile" style="left:947px;background:#f9cf00"></div>
<div class="tile" style="left:1240px;background:#00a29b"></div>
<div class="tile" style="left:1533px;width:284px;background:#f9cf00"></div>
<svg width="1978" height="1328" viewBox="0 0 1978 1328" style="left:0;top:0">
  <g fill="#1a1616"><path d="M1188 1089 L1228 1053 V1089 Z"/><path d="M1481 1089 L1521 1053 V1089 Z"/><path d="M1775 1089 L1815 1053 V1089 Z"/></g>
  <!-- calendar + clock -->
  <rect x="1033.500" y="877" width="106.500" height="97" fill="#fff"/>
  <g fill="none" stroke="#0b0b0b" stroke-width="4" stroke-linecap="round" stroke-linejoin="round">
    <path d="M1033.500 949 V877 H1140 V932 M1033.500 957 v.100 M1033.500 966 V974 H1098"/>
    <path d="M1033.500 895 H1140"/>
    <path d="M1058.500 877 A9 9 0 1 0 1051.800 885.700 M1131 877 A9 9 0 1 0 1124.300 885.700" stroke-width="3.800"/>
    <circle cx="1131" cy="965.500" r="26.500" fill="#fff"/>
    <path d="M1131.500 952 V964.500 L1126.500 969.500"/>
  </g>
  <!-- person -->
  <g fill="#050505">
    <circle cx="1382" cy="892" r="27.500"/>
    <path d="M1333 946 Q1333 934 1344 928 L1356 920 Q1382 936 1408 920 L1420 928 Q1431 934 1431 946 V968 Q1431 978 1420 981 Q1382 990 1344 981 Q1333 978 1333 968 Z"/>
  </g>
  <!-- house -->
  <path d="M1631 912 L1675 880 L1720 912 V974 Q1720 982 1712 982 H1639 Q1631 982 1631 974 Z" fill="#fff"/>
  <g fill="none" stroke="#0b0b0b" stroke-width="3.700" stroke-linecap="round" stroke-linejoin="round">
    <path d="M1631 918 V974 Q1631 982 1639 982 H1712 Q1720 982 1720 974 V968.500 M1720 959 V918" />
    <path d="M1671.500 872.500 Q1675 869.500 1678.500 872.500 L1731 912 Q1735 918 1730 922 Q1725 926 1720 922 L1675 886 L1630 922 Q1625 926 1620 922 Q1615 918 1619 912 Z" fill="#fff"/>
    <path d="M1661 980 V952 Q1661 937 1675 937 Q1689 937 1689 952 V980" />
  </g>
  <path d="M1644.200 909.600 L1648.300 906.300" stroke="#fff" stroke-width="5.500" fill="none"/>
  <g fill="#0b0b0b"><circle cx="1642.800" cy="910.300" r="1.850"/><circle cx="1649.700" cy="904.800" r="1.850"/></g>
</svg>
<div class="tlab" style="left:947px">予約をする</div>
<div class="tlab" style="left:1240px">会員になる</div>
<div class="tlab" style="left:1533px">サービスを見る</div>

<!-- tooltip + page title -->
<div id="tip"><span>オブジェクトの削除を試行</span>
  <div class="abs" style="left:324px;top:10px;width:2px;height:28px;background:#fff;opacity:.85"></div>
  <svg width="24" height="24" viewBox="0 0 24 24" style="left:338px;top:11px" class="ic"><path d="M3 3 L21 21 M21 3 L3 21" style="stroke:#fff;stroke-width:4"/></svg>
</div>
<div id="ptl">1ページ - <i>タイトルを追加</i></div>

<!-- selection (indigo) clipped to inside of red annotation -->
<div class="abs" style="left:941px;top:540px;width:260px;height:280px;overflow:hidden">
  <svg width="260" height="280" viewBox="941 540 260 280" style="left:0;top:0">
    <g fill="#fff" stroke="#5258e4" stroke-width="3.400">
      <rect x="956" y="549" width="235" height="266" fill="none" stroke-width="3"/>
      <circle cx="956" cy="549" r="10.200"/><circle cx="1191" cy="549" r="10.200"/>
      <circle cx="956" cy="815" r="10.200"/><circle cx="1191" cy="815" r="10.200"/>
      <rect x="1053" y="541.500" width="40" height="15" rx="7.500"/><rect x="1053" y="807.500" width="40" height="15" rx="7.500"/>
      <rect x="948.500" y="662" width="15" height="40" rx="7.500"/><rect x="1183.500" y="662" width="15" height="40" rx="7.500"/>
    </g>
  </svg>
</div>
<!-- rotate handle -->
<div class="abs" style="left:1050px;top:845px;width:47px;height:47px;border-radius:24px;background:#5258e4">
  <svg width="47" height="47" viewBox="0 0 47 47" style="left:0;top:0" fill="none" stroke="#fff" stroke-width="3.200" stroke-linecap="round" stroke-linejoin="round"><path d="M13.800 19.400 A11.400 11.400 0 1 1 15.800 30.600"/><path d="M9.600 13.600 L10 21 L17 20.300 Z" fill="#fff" stroke-width="1.400"/></svg>
</div>
<!-- red annotation around selected image -->
<div class="abs" style="left:931px;top:530px;width:280px;height:300px;border:6px solid #ff0000;border-radius:13px;box-shadow:0 0 0 4px #fff, inset 0 0 0 4px #fff;z-index:20"></div>

<!-- right rail -->
<div class="rbtn" style="left:1815px;top:269px;width:104px;height:48px"><svg width="24" height="16" viewBox="0 0 24 16" style="left:40px;top:16px" class="ic" stroke-width="4"><path d="M4 12 L12 4 L20 12"/></svg></div>
<div class="thumb" style="top:349px;border:4px solid #292929;height:127px;width:127px;background:linear-gradient(#e9e9e9,#fff 42%);-webkit-mask-image:linear-gradient(rgba(0,0,0,.5),#000 45%);mask-image:linear-gradient(rgba(0,0,0,.5),#000 45%)">
  <svg width="119" height="119" viewBox="1807 353 119 119" style="left:0;top:0"><use href="#woman" transform="translate(1604,260.500) scale(.222)" style="stroke:#333;stroke-width:3.400"/></svg>
</div>
<div class="thumb" style="top:490px">
  <svg width="120" height="119" viewBox="0 0 120 119" style="left:0;top:0">
    <g font-family="Liberation Sans, sans-serif" fill="#111" stroke="#fff" paint-order="fill stroke">
      <text x="11" y="72" font-size="39" stroke-width=".500" textLength="46" lengthAdjust="spacingAndGlyphs">20</text>
      <text x="58" y="72" font-size="23" stroke-width=".200" textLength="50" lengthAdjust="spacingAndGlyphs">%OFF</text>
    </g>
    <path d="M38 68 L52 48" stroke="#111" stroke-width="2.200"/>
  </svg>
</div>
<div class="thumb" style="top:630px"><svg width="120" height="119" viewBox="0 0 120 119" style="left:0;top:0"><path d="M14 99 L108 18 V99 Z" fill="#1a1616"/></svg></div>
<div class="thumb" style="top:770px"><svg width="120" height="119" viewBox="0 0 120 119" style="left:0;top:0"><path d="M14 99 L108 18 V99 Z" fill="#1a1616"/></svg></div>
<div class="thumb" style="top:910px;border-color:#dcdcdc;-webkit-mask-image:linear-gradient(#000 28%,rgba(0,0,0,.55) 60%,transparent 95%);mask-image:linear-gradient(#000 28%,rgba(0,0,0,.55) 60%,transparent 95%)"><svg width="120" height="119" viewBox="0 0 120 119" style="left:0;top:0"><path d="M13 19 H108 L13 98 Z" fill="#1a1616"/></svg></div>

<div class="rbtn" style="left:1815px;top:1034px;width:104px;height:48px"><svg width="24" height="16" viewBox="0 0 24 16" style="left:40px;top:17px" class="ic" stroke-width="4"><path d="M4 4 L12 12 L20 4"/></svg></div>
<div class="rbtn" style="left:1835px;top:1107px;width:63px;height:63px;border-radius:32px"><svg width="24" height="24" viewBox="0 0 24 24" style="left:20px;top:20px" class="ic" stroke-width="3.800"><path d="M3 3 L21 21 M21 3 L3 21"/></svg></div>
<div class="rbtn" style="left:1620px;top:1276px;width:63px;height:63px;border-radius:32px"><svg width="36" height="10" viewBox="0 0 36 10" style="left:14px;top:27px"><circle cx="5" cy="5" r="4.200" fill="#292929"/><circle cx="18" cy="5" r="4.200" fill="#292929"/><circle cx="31" cy="5" r="4.200" fill="#292929"/></svg></div>
<div class="rbtn" style="left:1700px;top:1277px;width:230px;height:64px;border-radius:32px;font-size:28px;font-weight:bold;line-height:64px;text-align:center;white-space:nowrap;color:#292929">ページを追加</div>


<!--CANVASEND-->
</body>
</html>
